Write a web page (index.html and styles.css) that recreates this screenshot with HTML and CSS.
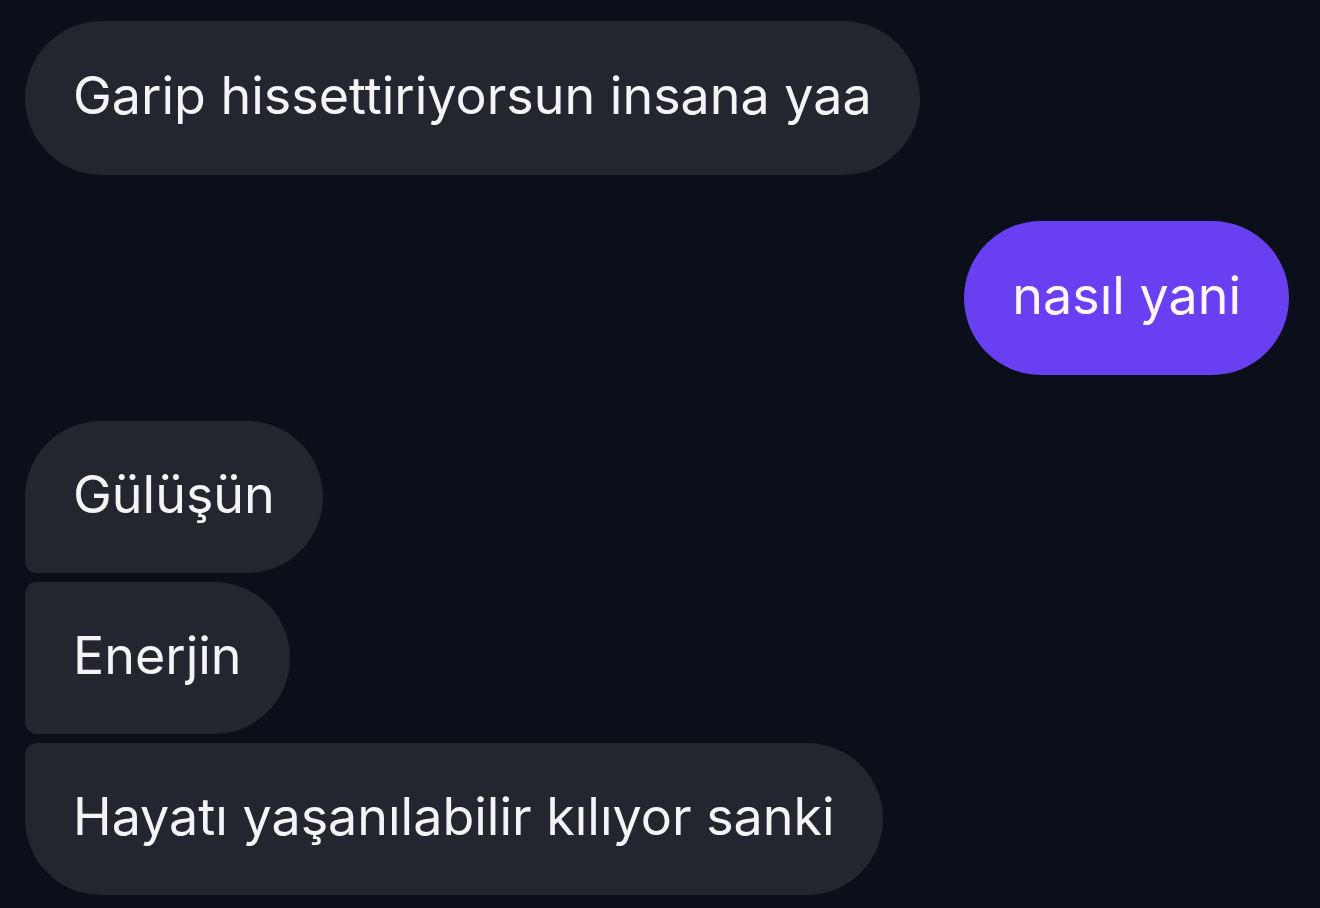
FILE: index.html
```html
<!DOCTYPE html>
<html lang="tr">
<head>
<meta charset="utf-8">
<link rel="stylesheet" href="styles.css">
</head>
<body>
<div class="chat">
  <div class="group in">
    <div class="bubble">Garip hissettiriyorsun insana yaa</div>
  </div>
  <div class="group out">
    <div class="bubble">nasıl yani</div>
  </div>
  <div class="group in stack">
    <div class="bubble first">Gülüşün</div>
    <div class="bubble middle">Enerjin</div>
    <div class="bubble last">Hayatı yaşanılabilir kılıyor sanki</div>
  </div>
</div>
</body>
</html>
```
FILE: styles.css
```css
html, body {
  margin: 0;
  padding: 0;
  background: #0b0f19;
}
body {
  font-family: Inter, "Noto Sans", sans-serif;
  color: #f4f4f6;
}
.chat {
  display: flex;
  flex-direction: column;
  gap: 46px;
  padding: 21px 31px 0 25px;
}
.group {
  display: flex;
  flex-direction: column;
  gap: 9px;
}
.group.in { align-items: flex-start; }
.group.out { align-items: flex-end; }
.bubble {
  height: 154px;
  box-sizing: border-box;
  padding: 0 48px 5px;
  display: flex;
  align-items: center;
  font-size: 52px;
  line-height: 1;
  background: #23262f;
  border-radius: 77px;
  white-space: nowrap;
}
.stack .bubble { height: 152px; }
.out .bubble {
  background: #6940f1;
  color: #fbf6ff;
}
.bubble.first { border-radius: 77px 77px 77px 12px; }
.bubble.middle { border-radius: 12px 77px 77px 12px; }
.bubble.last { border-radius: 12px 77px 77px 77px; }
```
